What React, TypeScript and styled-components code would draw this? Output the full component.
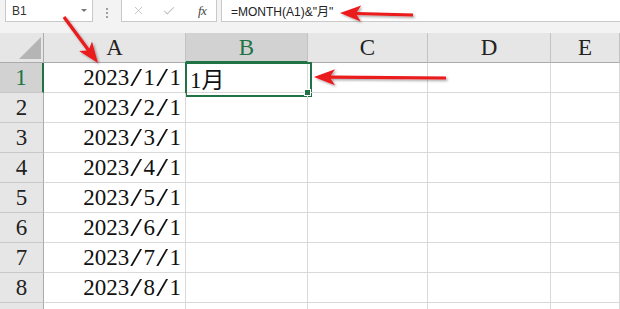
import React from 'react';
import styled, { createGlobalStyle } from 'styled-components';
import { X, Check } from 'lucide-react';

const Global = createGlobalStyle`
  html, body { margin: 0; padding: 0; background: #fff; }
  body { width: 620px; height: 309px; overflow: hidden; }
  * { box-sizing: border-box; }
`;

const GREEN = '#217346';

const Page = styled.div`
  position: relative;
  width: 620px;
  height: 309px;
  overflow: hidden;
  display: flex;
  flex-direction: column;
  background: #fff;
`;

const TopBar = styled.div`
  height: 33px;
  flex-shrink: 0;
  background: #f3f3f3;
  display: flex;
  align-items: flex-start;
`;

const Box = styled.div<{ $w: number; $ml: number }>`
  margin-left: ${p => p.$ml}px;
  margin-top: -1px;
  width: ${p => p.$w}px;
  height: 23px;
  flex-shrink: 0;
  border: 1px solid #c9c9c9;
  background: #fff;
  display: flex;
  align-items: center;
`;

const NameText = styled.span`
  flex: 1;
  padding-left: 6px;
  font: 12px "Liberation Sans", Arial, sans-serif;
  color: #333;
`;

const Caret = styled.span`
  width: 0;
  height: 0;
  margin-right: 5px;
  border-left: 3.5px solid transparent;
  border-right: 3.5px solid transparent;
  border-top: 3.5px solid #777;
`;

const Dots = styled.div`
  margin-left: 13px;
  margin-top: 8px;
  display: flex;
  flex-direction: column;
  gap: 2px;
`;

const Dot = styled.span`
  width: 2px;
  height: 2px;
  background: #a0a0a0;
`;

const IconSlot = styled.span<{ $ml: number }>`
  margin-left: ${p => p.$ml}px;
  display: flex;
  align-items: center;
  color: #bdbdbd;
`;

const Fx = styled.span`
  margin-left: 22px;
  font: italic 13px "Liberation Serif", serif;
  color: #444;
  letter-spacing: -0.5px;
`;

const FormulaText = styled.span`
  padding-left: 9px;
  font: 12px "Liberation Sans", "Noto Sans CJK SC", Arial, sans-serif;
  color: #222;
`;

const Sheet = styled.div`
  display: grid;
  grid-template-columns: 44px 142px 122px 120px 123px 69px;
  grid-auto-rows: 30px;
`;

const serif = `"Liberation Serif", "Noto Sans CJK SC", serif`;

const Corner = styled.div`
  background: #e6e6e6;
  border-right: 1px solid #ababab;
  border-bottom: 1px solid #ababab;
  position: relative;
`;

const ColHead = styled.div<{ $sel?: boolean }>`
  background: ${p => (p.$sel ? '#d2d2d2' : '#e6e6e6')};
  border-right: 1px solid #c3c3c3;
  border-bottom: ${p => (p.$sel ? `2px solid ${GREEN}` : '1px solid #ababab')};
  color: ${p => (p.$sel ? GREEN : '#222')};
  font: 23px ${serif};
  display: flex;
  align-items: center;
  justify-content: center;
  padding-top: ${p => (p.$sel ? 1 : 0)}px;
`;

const RowHead = styled.div<{ $sel?: boolean }>`
  background: ${p => (p.$sel ? '#d2d2d2' : '#e6e6e6')};
  border-right: ${p => (p.$sel ? `2px solid ${GREEN}` : '1px solid #ababab')};
  border-bottom: 1px solid #c8c8c8;
  color: ${p => (p.$sel ? GREEN : '#222')};
  font: 23px ${serif};
  display: flex;
  align-items: center;
  justify-content: center;
`;

const Cell = styled.div<{ $align?: 'left' | 'right'; $sel?: boolean }>`
  position: relative;
  border-right: 1px solid #d9d9d9;
  border-bottom: 1px solid #d9d9d9;
  font: 23px ${serif};
  color: #111;
  display: flex;
  align-items: center;
  justify-content: ${p => (p.$align === 'left' ? 'flex-start' : 'flex-end')};
  padding: 1px 4px 0 4px;
  white-space: nowrap;
  ${p =>
    p.$sel
      ? `
    &::after {
      content: '';
      position: absolute;
      left: -1px;
      top: -1px;
      width: 123px;
      height: 31px;
      border: 2px solid ${GREEN};
      pointer-events: none;
    }
  `
      : ''}
`;

const Handle = styled.span`
  position: absolute;
  right: -4px;
  bottom: -4px;
  width: 7px;
  height: 7px;
  background: ${GREEN};
  border: 1px solid #fff;
  z-index: 2;
`;

const Slash = styled.span`
  display: inline-block;
  margin: 0 4px;
  transform: scale(1.85, 1.08);
`;

const Overlay = styled.svg`
  position: absolute;
  left: 0;
  top: 0;
  pointer-events: none;
`;

function arrowPoints(tx: number, ty: number, fx: number, fy: number, head = 21, half = 8, shaft = 1.6) {
  const dx = fx - tx;
  const dy = fy - ty;
  const L = Math.hypot(dx, dy);
  const ux = dx / L;
  const uy = dy / L;
  const px = -uy;
  const py = ux;
  const bx = tx + ux * head;
  const by = ty + uy * head;
  const nx = tx + ux * head * 0.8;
  const ny = ty + uy * head * 0.8;
  const pts = [
    [tx, ty],
    [bx + px * half, by + py * half],
    [nx + px * shaft, ny + py * shaft],
    [fx + px * shaft, fy + py * shaft],
    [fx - px * shaft, fy - py * shaft],
    [nx - px * shaft, ny - py * shaft],
    [bx - px * half, by - py * half],
  ];
  return pts.map(p => p.map(v => v.toFixed(1)).join(',')).join(' ');
}

const arrows = [
  { tx: 98, ty: 63, fx: 64, fy: 17 },
  { tx: 340, ty: 13, fx: 413, fy: 15 },
  { tx: 314, ty: 77, fx: 446, fy: 78 },
];

const dates = ['2023/1/1', '2023/2/1', '2023/3/1', '2023/4/1', '2023/5/1', '2023/6/1', '2023/7/1', '2023/8/1'];
const cols = ['A', 'B', 'C', 'D', 'E'];

function DateText({ value }: { value: string }) {
  const parts = value.split('/');
  return (
    <span>
      {parts.map((p, i) => (
        <React.Fragment key={i}>
          {i > 0 && <Slash>/</Slash>}
          {p}
        </React.Fragment>
      ))}
    </span>
  );
}

export default function App() {
  return (
    <Page>
      <Global />
      <TopBar>
        <Box $w={88} $ml={5}>
          <NameText>B1</NameText>
          <Caret />
        </Box>
        <Dots>
          <Dot />
          <Dot />
          <Dot />
        </Dots>
        <Box $w={96} $ml={13}>
          <IconSlot $ml={10}>
            <X size={13} strokeWidth={1.6} />
          </IconSlot>
          <IconSlot $ml={17}>
            <Check size={14} strokeWidth={1.8} />
          </IconSlot>
          <Fx>fx</Fx>
        </Box>
        <Box $w={402} $ml={4}>
          <FormulaText>=MONTH(A1)&amp;"月"</FormulaText>
        </Box>
      </TopBar>
      <Sheet>
        <Corner>
          <svg width="44" height="30" style={{ position: 'absolute', left: 0, top: 0 }}>
            <polygon points="19,26 41,4 41,26" fill="#b5b5b5" />
          </svg>
        </Corner>
        {cols.map(c => (
          <ColHead key={c} $sel={c === 'B'}>
            {c}
          </ColHead>
        ))}
        {dates.map((d, i) => (
          <React.Fragment key={d}>
            <RowHead $sel={i === 0}>{i + 1}</RowHead>
            <Cell>
              <DateText value={d} />
            </Cell>
            <Cell $align="left" $sel={i === 0}>
              {i === 0 ? '1月' : ''}
              {i === 0 && <Handle />}
            </Cell>
            <Cell />
            <Cell />
            <Cell />
          </React.Fragment>
        ))}
        <RowHead />
        <Cell />
        <Cell />
        <Cell />
        <Cell />
        <Cell />
      </Sheet>
      <Overlay width="620" height="309">
        <defs>
          <filter id="sh" x="-20%" y="-50%" width="140%" height="200%">
            <feDropShadow dx="1.5" dy="1.5" stdDeviation="1.2" floodColor="#000" floodOpacity="0.35" />
          </filter>
        </defs>
        {arrows.map((a, i) => (
          <polygon key={i} points={arrowPoints(a.tx, a.ty, a.fx, a.fy)} fill="#ea1a1f" filter="url(#sh)" />
        ))}
      </Overlay>
    </Page>
  );
}
